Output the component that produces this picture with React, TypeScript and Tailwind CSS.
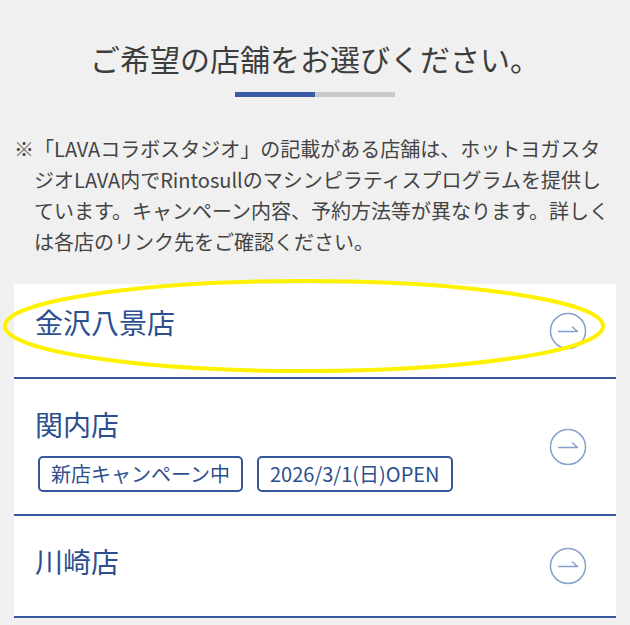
const stores = [
  { name: '金沢八景店', badges: [] as string[], first: true },
  { name: '関内店', badges: ['新店キャンペーン中', '2026/3/1(日)OPEN'], first: false },
  { name: '川崎店', badges: [] as string[], first: false },
];

function ArrowCircle() {
  return (
    <svg width="38" height="38" viewBox="0 0 38 38" fill="none" className="shrink-0">
      <circle cx="19" cy="19" r="17.5" stroke="#86a1cf" strokeWidth="1.5" />
      <path d="M9.5 19.5H28.5L23.5 15" stroke="#86a1cf" strokeWidth="1.5" strokeLinecap="round" strokeLinejoin="round" />
    </svg>
  );
}

export default function App() {
  return (
    <div
      className="relative min-h-screen bg-[#f0f0f0] px-[14px] overflow-hidden"
      style={{ fontFamily: '"Noto Sans CJK JP", "Noto Sans", sans-serif' }}
    >
      <h1 className="pt-[38px] text-center text-[30px] leading-[40px] font-normal text-[#3d3d3d]">
        ご希望の店舗をお選びください。
      </h1>
      <div className="mx-auto mt-[14px] flex h-[5px] w-[160px]">
        <div className="w-1/2 bg-[#3a5ca5]" />
        <div className="w-1/2 bg-[#c9c9c9]" />
      </div>

      <p className="mt-[36px] pl-[20px] -indent-[20px] text-[20px] leading-[31px] text-[#444]">
        ※「LAVAコラボスタジオ」の記載がある店舗は、ホットヨガスタジオLAVA内でRintosullのマシンピラティスプログラムを提供しています。キャンペーン内容、予約方法等が異なります。詳しくは各店のリンク先をご確認ください。
      </p>

      <ul className="mt-[27px] bg-white">
        {stores.map((s) => (
          <li
            key={s.name}
            className="flex items-center justify-between border-b-2 border-[#36599c] pl-[21px] pr-[29px]"
          >
            <div className={`${s.first ? 'pt-[20px]' : 'pt-[27px]'} ${s.badges.length ? 'pb-[22px]' : 'pb-[37px]'}`}>
              <div className="text-[28px] leading-[36px] text-[#2d4f8e]">{s.name}</div>
              {s.badges.length > 0 && (
                <div className="mt-[14px] ml-[3px] flex gap-[14px]">
                  {s.badges.map((b) => (
                    <span
                      key={b}
                      className="flex h-[36px] items-center rounded-[5px] border-2 border-[#34579a] px-[11px] text-[20px] text-[#2d4f8e]"
                    >
                      {b}
                    </span>
                  ))}
                </div>
              )}
            </div>
            <ArrowCircle />
          </li>
        ))}
      </ul>

      <svg className="pointer-events-none absolute left-0 top-0" width="630" height="625">
        <ellipse cx="304" cy="326" rx="299" ry="45" fill="none" stroke="#fff200" strokeWidth="4" />
      </svg>
    </div>
  );
}
